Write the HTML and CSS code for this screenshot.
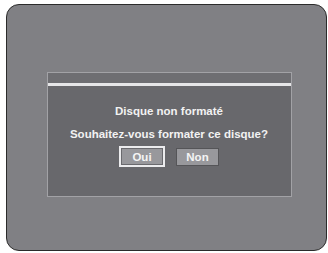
FILE: index.html
```html
<!DOCTYPE html>
<html>
<head>
<meta charset="utf-8">
<link rel="stylesheet" href="styles.css">
</head>
<body>
<div class="screen">
  <div class="dialog">
    <div class="titlebar"></div>
    <div class="divider"></div>
    <div class="content">
      <p class="line">Disque non formaté</p>
      <p class="line">Souhaitez-vous formater ce disque?</p>
      <div class="buttons">
        <span class="btn btn-active">Oui</span>
        <span class="btn">Non</span>
      </div>
    </div>
  </div>
</div>
</body>
</html>
```
FILE: styles.css
```css
html, body {
  margin: 0;
  padding: 0;
  background: #ffffff;
}
body {
  width: 328px;
  height: 253px;
  font-family: "Liberation Sans", Arial, sans-serif;
}
.screen {
  box-sizing: border-box;
  margin: 4px 0 0 6px;
  width: 321px;
  height: 247px;
  border: 1.5px solid #2b2b2b;
  border-radius: 13px;
  background: #808084;
  padding: 66.5px 0 0 39.5px;
}
.dialog {
  box-sizing: border-box;
  width: 245px;
  height: 125px;
  border: 1.5px solid #a2a2a6;
  background: #68686c;
  display: flex;
  flex-direction: column;
}
.titlebar {
  height: 10.5px;
  background: #6e6e72;
}
.divider {
  height: 3px;
  background: #e6e6e8;
}
.content {
  display: flex;
  flex-direction: column;
  align-items: center;
  padding-top: 13.5px;
}
.line {
  margin: 0;
  color: #f2f2f2;
  font-weight: bold;
  font-size: 11.5px;
  line-height: 23px;
  text-align: center;
}
.buttons {
  display: flex;
  align-items: center;
  gap: 11px;
  margin-top: 0.5px;
}
.btn {
  box-sizing: border-box;
  display: flex;
  align-items: center;
  justify-content: center;
  width: 43px;
  height: 18px;
  background: #98989c;
  border: 1px solid #555558;
  color: #f4f4f4;
  font-weight: bold;
  font-size: 11.5px;
}
.btn-active {
  width: 46px;
  height: 21px;
  border: 2px solid #ececee;
  box-shadow: inset 0 0 0 1px #6a6a6e;
}
```
